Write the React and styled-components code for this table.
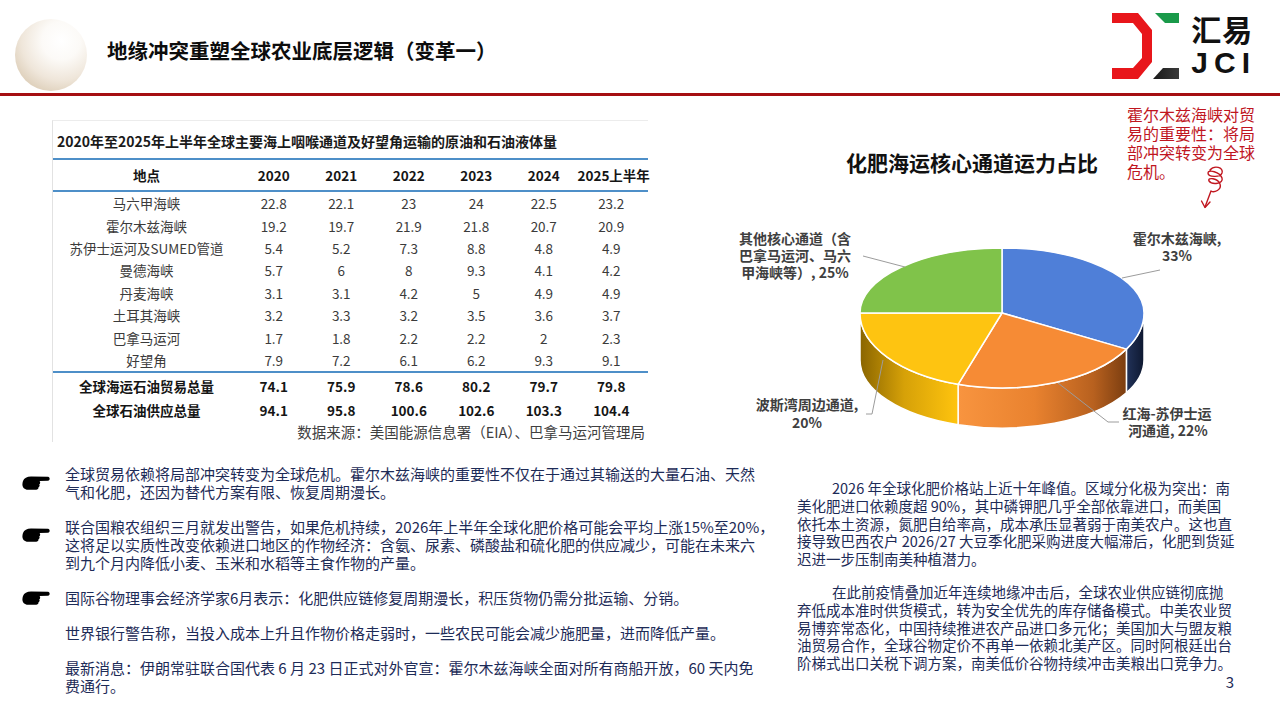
import React from "react";
import styled, { createGlobalStyle } from "styled-components";

const GlobalStyle = createGlobalStyle`
  html, body { margin: 0; padding: 0; background: #fff; }
  body { font-family: "Noto Sans CJK SC", "Noto Sans", sans-serif; }
`;

const tableRows = [
  ["马六甲海峡", "22.8", "22.1", "23", "24", "22.5", "23.2"],
  ["霍尔木兹海峡", "19.2", "19.7", "21.9", "21.8", "20.7", "20.9"],
  ["苏伊士运河及SUMED管道", "5.4", "5.2", "7.3", "8.8", "4.8", "4.9"],
  ["曼德海峡", "5.7", "6", "8", "9.3", "4.1", "4.2"],
  ["丹麦海峡", "3.1", "3.1", "4.2", "5", "4.9", "4.9"],
  ["土耳其海峡", "3.2", "3.3", "3.2", "3.5", "3.6", "3.7"],
  ["巴拿马运河", "1.7", "1.8", "2.2", "2.2", "2", "2.3"],
  ["好望角", "7.9", "7.2", "6.1", "6.2", "9.3", "9.1"],
];
const totalRows = [
  ["全球海运石油贸易总量", "74.1", "75.9", "78.6", "80.2", "79.7", "79.8"],
  ["全球石油供应总量", "94.1", "95.8", "100.6", "102.6", "103.3", "104.4"],
];
const headRow = ["地点", "2020", "2021", "2022", "2023", "2024", "2025上半年"];

const bullets = [
  { hand: 10, lines: ["全球贸易依赖将局部冲突转变为全球危机。霍尔木兹海峡的重要性不仅在于通过其输送的大量石油、天然", "气和化肥，还因为替代方案有限、恢复周期漫长。"] },
  { hand: 9, lines: ["联合国粮农组织三月就发出警告，如果危机持续，2026年上半年全球化肥价格可能会平均上涨15%至20%，", "这将足以实质性改变依赖进口地区的作物经济：含氨、尿素、磷酸盐和硫化肥的供应减少，可能在未来六", "到九个月内降低小麦、玉米和水稻等主食作物的产量。"] },
  { hand: 1, lines: ["国际谷物理事会经济学家6月表示：化肥供应链修复周期漫长，积压货物仍需分批运输、分销。"] },
  { hand: null, lines: ["世界银行警告称，当投入成本上升且作物价格走弱时，一些农民可能会减少施肥量，进而降低产量。"] },
  { hand: null, lines: ["最新消息：伊朗常驻联合国代表 6 月 23 日正式对外官宣：霍尔木兹海峡全面对所有商船开放，60 天内免", "费通行。"] },
];

const paragraphs = [
  ["2026 年全球化肥价格站上近十年峰值。区域分化极为突出：南", "美化肥进口依赖度超 90%，其中磷钾肥几乎全部依靠进口，而美国", "依托本土资源，氮肥自给率高，成本承压显著弱于南美农户。这也直", "接导致巴西农户 2026/27 大豆季化肥采购进度大幅滞后，化肥到货延", "迟进一步压制南美种植潜力。"],
  ["在此前疫情叠加近年连续地缘冲击后，全球农业供应链彻底抛", "弃低成本准时供货模式，转为安全优先的库存储备模式。中美农业贸", "易博弈常态化，中国持续推进农产品进口多元化；美国加大与盟友粮", "油贸易合作，全球谷物定价不再单一依赖北美产区。同时阿根廷出台", "阶梯式出口关税下调方案，南美低价谷物持续冲击美粮出口竞争力。"],
];

// pie geometry (page coordinates, the svg viewBox matches its place)
const CX = 1002, CY = 313, RX = 142, RY_BACK = 65, RY_FRONT = 75, BY = 360, BRY = 68;
const rad = (d) => (d * Math.PI) / 180;
const topPt = (a) => {
  const c = Math.cos(rad(a));
  const ry = c >= 0 ? RY_BACK : RY_FRONT;
  return [CX + RX * Math.sin(rad(a)), CY - ry * c];
};
const botPt = (a) => [CX + RX * Math.sin(rad(a)), BY - BRY * Math.cos(rad(a))];
const f = (n) => n.toFixed(1);

const slicePath = (a0, a1) => {
  const stops = [a0, ...[90, 270].filter((b) => b > a0 && b < a1), a1];
  const [x0, y0] = topPt(a0);
  let d = `M ${CX} ${CY} L ${f(x0)} ${f(y0)}`;
  for (let i = 1; i < stops.length; i++) {
    const mid = (stops[i - 1] + stops[i]) / 2;
    const ry = Math.cos(rad(mid)) >= 0 ? RY_BACK : RY_FRONT;
    const [x, y] = topPt(stops[i]);
    d += ` A ${RX} ${ry} 0 0 1 ${f(x)} ${f(y)}`;
  }
  return d + " Z";
};

const wallPath = (a0, a1) => {
  const s = Math.max(a0, 90), e = Math.min(a1, 270);
  const [x0, y0] = topPt(s), [x1, y1] = topPt(e), [x2, y2] = botPt(e), [x3, y3] = botPt(s);
  return `M ${f(x0)} ${f(y0)} A ${RX} ${RY_FRONT} 0 0 1 ${f(x1)} ${f(y1)} L ${f(x2)} ${f(y2)} A ${RX} ${BRY} 0 0 0 ${f(x3)} ${f(y3)} Z`;
};

const slices = [
  { a0: 0, a1: 118.8, top: "#4f7fd8", wall: "url(#wallBlue)" },
  { a0: 118.8, a1: 198, top: "#f68b35", wall: "url(#wallOrange)" },
  { a0: 198, a1: 270, top: "#fec411", wall: "url(#wallYellow)" },
  { a0: 270, a1: 360, top: "#80c34a", wall: null },
];

const Slide = styled.div`
  width: 1280px;
  height: 720px;
  overflow: hidden;
  background: #fff;
  display: flex;
  flex-direction: column;
`;

const Header = styled.header`
  height: 93px;
  display: flex;
  align-items: flex-start;
  padding-left: 15px;
`;

const Sphere = styled.div`
  width: 72px;
  height: 72px;
  margin-top: 19px;
  border-radius: 50%;
  background: radial-gradient(circle at 64% 30%, #ffffff 0%, #fcfaf7 28%, #efe6da 58%, #dccdb7 82%, #cdb99c 100%);
`;

const Title = styled.h1`
  margin: 37px 0 0 20px;
  font-size: 20.5px;
  line-height: 26px;
  font-weight: 700;
  color: #0d0d0d;
`;

const Logo = styled.div`
  margin: 12px 24px 0 auto;
  display: flex;
  gap: 11px;
`;

const LogoText = styled.div`
  display: flex;
  flex-direction: column;
  color: #111;
  font-weight: 700;
`;

const LogoCn = styled.span`
  font-size: 30px;
  line-height: 33px;
  letter-spacing: 1px;
`;

const LogoEn = styled.span`
  font-family: "Liberation Sans", Arial, sans-serif;
  font-size: 30px;
  line-height: 36px;
  letter-spacing: 6px;
`;

const Rule = styled.div`
  height: 3px;
  background: #a50f12;
`;

const Middle = styled.section`
  height: 359px;
  display: grid;
  grid-template-columns: 648px 1fr;
`;

const TableFrame = styled.div`
  margin: 24px 0 0 52px;
  height: 321px;
  border-top: 1px solid #ececec;
  border-left: 1px solid #e2e2e2;
  display: flex;
  flex-direction: column;
`;

const TableTitle = styled.div`
  margin: 10px 0 7px 4px;
  font-size: 14px;
  line-height: 20px;
  font-weight: 700;
  color: #1a1a1a;
  white-space: nowrap;
`;

const Row = styled.div`
  display: grid;
  grid-template-columns: 187px repeat(6, 67.5px);
  align-items: center;
  height: ${(p) => p.$h}px;
  font-size: 13.5px;
  font-weight: ${(p) => (p.$bold ? 700 : 400)};
  color: ${(p) => (p.$bold ? "#151515" : "#3b3b3b")};
  border-top: ${(p) => (p.$line ? "2px solid #4e8fc8" : "none")};
  border-bottom: ${(p) => (p.$under ? "2px solid #4e8fc8" : "none")};
`;

const Cell = styled.span`
  text-align: center;
  white-space: nowrap;
`;

const Source = styled.div`
  margin-top: 1px;
  padding-right: 3px;
  text-align: right;
  font-size: 14.5px;
  line-height: 20px;
  color: #404040;
`;

const ChartPanel = styled.div`
  display: flex;
  flex-direction: column;
`;

const ChartTop = styled.div`
  height: 129px;
  display: flex;
  align-items: flex-start;
`;

const ChartTitle = styled.h2`
  margin: 53px 0 0 198px;
  font-size: 21px;
  line-height: 26px;
  font-weight: 700;
  color: #111;
`;

const Note = styled.div`
  position: relative;
  margin: 9px 23px 0 auto;
  width: 130px;
  font-size: 16px;
  line-height: 19px;
  color: #c0161f;
  white-space: nowrap;
`;

const Squiggle = styled.svg`
  position: absolute;
  left: 71px;
  top: 57px;
  overflow: visible;
`;

const PieSvg = styled.svg`
  margin-left: 72px;
  display: block;
`;

const Bottom = styled.section`
  flex: 1;
  display: grid;
  grid-template-columns: 790px 1fr;
`;

const BulletList = styled.div`
  padding-top: 10px;
  color: #1d2b57;
  font-size: 15px;
  line-height: 18px;
`;

const Item = styled.div`
  display: grid;
  grid-template-columns: 65px 1fr;
  margin-bottom: 17px;
`;

const HandSvg = styled.svg`
  display: block;
  margin: ${(p) => p.$top}px 0 0 22px;
`;

const ItemText = styled.p`
  margin: 0;
  white-space: nowrap;
`;

const Notes = styled.div`
  padding: 24px 0 0 7px;
  color: #1d2b57;
  font-size: 14.5px;
  line-height: 17.8px;
`;

const Para = styled.p`
  margin: 0 0 15px;
  text-indent: 35px;
  white-space: nowrap;
`;

const PageNo = styled.div`
  margin-top: -14px;
  padding-right: 46px;
  text-align: right;
  font-size: 15px;
  line-height: 18px;
  color: #1d2b57;
`;

const Hand = ({ top }) => (
  <HandSvg $top={top} width="28" height="15" viewBox="0 0 28 15">
    <path
      d="M1 6 C2 3 5 1.4 9 1.4 L26 1.8 C28.2 2 28.2 5.6 26 5.8 L17.5 6 C18.6 7.2 18.3 8.8 17.2 9.4 C18 10.4 17.6 11.9 16.4 12.3 C16.8 13.6 15.8 14.8 14.2 14.8 L6 14.8 C2.5 14.8 0.4 12.3 0.4 9.5 C0.4 8.2 0.6 7 1 6 Z"
      fill="#000"
    />
  </HandSvg>
);

const LogoMark = () => (
  <svg width="68" height="68" viewBox="1112 12 68 68">
    <defs>
      <linearGradient id="logoDark" x1="0" y1="0" x2="1" y2="0">
        <stop offset="0" stopColor="#1a1a1a" />
        <stop offset="1" stopColor="#3a3a3a" />
      </linearGradient>
    </defs>
    <polygon points="1112,13 1138,13 1152,30 1152,62 1138,79 1112,79 1112,68 1133,68 1142,58 1142,34 1133,23 1112,23" fill="#e8161b" />
    <polygon points="1155,13 1179,13 1179,23 1165,23" fill="#1a9a4a" />
    <polygon points="1163,68 1179,68 1179,79 1153,79" fill="url(#logoDark)" />
  </svg>
);

const PieChart = () => (
  <PieSvg width="520" height="215" viewBox="720 225 520 215">
    <defs>
      <linearGradient id="wallBlue" gradientUnits="userSpaceOnUse" x1="1126" y1="0" x2="1144" y2="0">
        <stop offset="0" stopColor="#22335a" />
        <stop offset="1" stopColor="#0e1830" />
      </linearGradient>
      <linearGradient id="wallOrange" gradientUnits="userSpaceOnUse" x1="958" y1="0" x2="1127" y2="0">
        <stop offset="0" stopColor="#f8943f" />
        <stop offset="0.45" stopColor="#e9822f" />
        <stop offset="0.8" stopColor="#b8611f" />
        <stop offset="1" stopColor="#7a3d10" />
      </linearGradient>
      <linearGradient id="wallYellow" gradientUnits="userSpaceOnUse" x1="860" y1="0" x2="958" y2="0">
        <stop offset="0" stopColor="#8a6500" />
        <stop offset="0.45" stopColor="#d6a108" />
        <stop offset="1" stopColor="#ffc40e" />
      </linearGradient>
    </defs>
    {slices.filter((s) => s.wall).map((s) => (
      <path key={`w${s.a0}`} d={wallPath(s.a0, s.a1)} fill={s.wall} stroke="#fff" strokeWidth="1.5" strokeLinejoin="round" />
    ))}
    {slices.map((s) => (
      <path key={`t${s.a0}`} d={slicePath(s.a0, s.a1)} fill={s.top} stroke="#fff" strokeWidth="1.5" strokeLinejoin="round" />
    ))}
    <g stroke="#9c9c9c" strokeWidth="1" fill="none">
      <polyline points="1122,278 1160,270" />
      <polyline points="863,256 905,267" />
      <polyline points="866,414 872,414 883,360" />
      <polyline points="1058,383 1108,422 1119,422" />
    </g>
    <g fill="#3f3f3f" fontSize="14" fontWeight="700" fontFamily="'Noto Sans CJK SC', sans-serif" textAnchor="middle">
      <text x="1177" y="244">霍尔木兹海峡,</text>
      <text x="1177" y="261">33%</text>
      <text x="795" y="244">其他核心通道（含</text>
      <text x="795" y="261">巴拿马运河、马六</text>
      <text x="795" y="278">甲海峡等）, 25%</text>
      <text x="807" y="410">波斯湾周边通道,</text>
      <text x="807" y="428">20%</text>
      <text x="1167" y="419">红海-苏伊士运</text>
      <text x="1168" y="436">河通道, 22%</text>
    </g>
  </PieSvg>
);

export default function App() {
  return (
    <Slide>
      <GlobalStyle />
      <Header>
        <Sphere />
        <Title>地缘冲突重塑全球农业底层逻辑（变革一）</Title>
        <Logo>
          <LogoMark />
          <LogoText>
            <LogoCn>汇易</LogoCn>
            <LogoEn>JCI</LogoEn>
          </LogoText>
        </Logo>
      </Header>
      <Rule />

      <Middle>
        <TableFrame>
          <TableTitle>2020年至2025年上半年全球主要海上咽喉通道及好望角运输的原油和石油液体量</TableTitle>
          <Row $h={30} $bold $line $under>
            {headRow.map((c) => <Cell key={c}>{c}</Cell>)}
          </Row>
          {tableRows.map((r) => (
            <Row key={r[0]} $h={22.5}>
              {r.map((c, i) => <Cell key={i}>{c}</Cell>)}
            </Row>
          ))}
          {totalRows.map((r, k) => (
            <Row key={r[0]} $h={k === 0 ? 25 : 23} $bold $line={k === 0}>
              {r.map((c, i) => <Cell key={i}>{c}</Cell>)}
            </Row>
          ))}
          <Source>数据来源：美国能源信息署（EIA）、巴拿马运河管理局</Source>
        </TableFrame>

        <ChartPanel>
          <ChartTop>
            <ChartTitle>化肥海运核心通道运力占比</ChartTitle>
            <Note>
              霍尔木兹海峡对贸<br />
              易的重要性：将局<br />
              部冲突转变为全球<br />
              危机。
              <Squiggle width="32" height="50" viewBox="0 0 32 50">
                <g stroke="#c0161f" strokeWidth="1.4" fill="none" strokeLinecap="round" strokeLinejoin="round">
                  <path d="M12 8 C16 3 26 5 24 11 C22 16 10 15 10 11 C10 7 22 10 24 16 C26 22 14 23 11 19 C9 15 20 16 22 22 C24 28 16 31 13 29 L7 45" />
                  <path d="M3.5 39 L7 45.5 L12 40" />
                </g>
              </Squiggle>
            </Note>
          </ChartTop>
          <PieChart />
        </ChartPanel>
      </Middle>

      <Bottom>
        <BulletList>
          {bullets.map((b, i) => (
            <Item key={i}>
              <div>{b.hand !== null && <Hand top={b.hand} />}</div>
              <ItemText>
                {b.lines.map((l, j) => (
                  <React.Fragment key={j}>
                    {j > 0 && <br />}
                    {l}
                  </React.Fragment>
                ))}
              </ItemText>
            </Item>
          ))}
        </BulletList>
        <Notes>
          {paragraphs.map((p, i) => (
            <Para key={i}>
              {p.map((l, j) => (
                <React.Fragment key={j}>
                  {j > 0 && <br />}
                  {l}
                </React.Fragment>
              ))}
            </Para>
          ))}
          <PageNo>3</PageNo>
        </Notes>
      </Bottom>
    </Slide>
  );
}
